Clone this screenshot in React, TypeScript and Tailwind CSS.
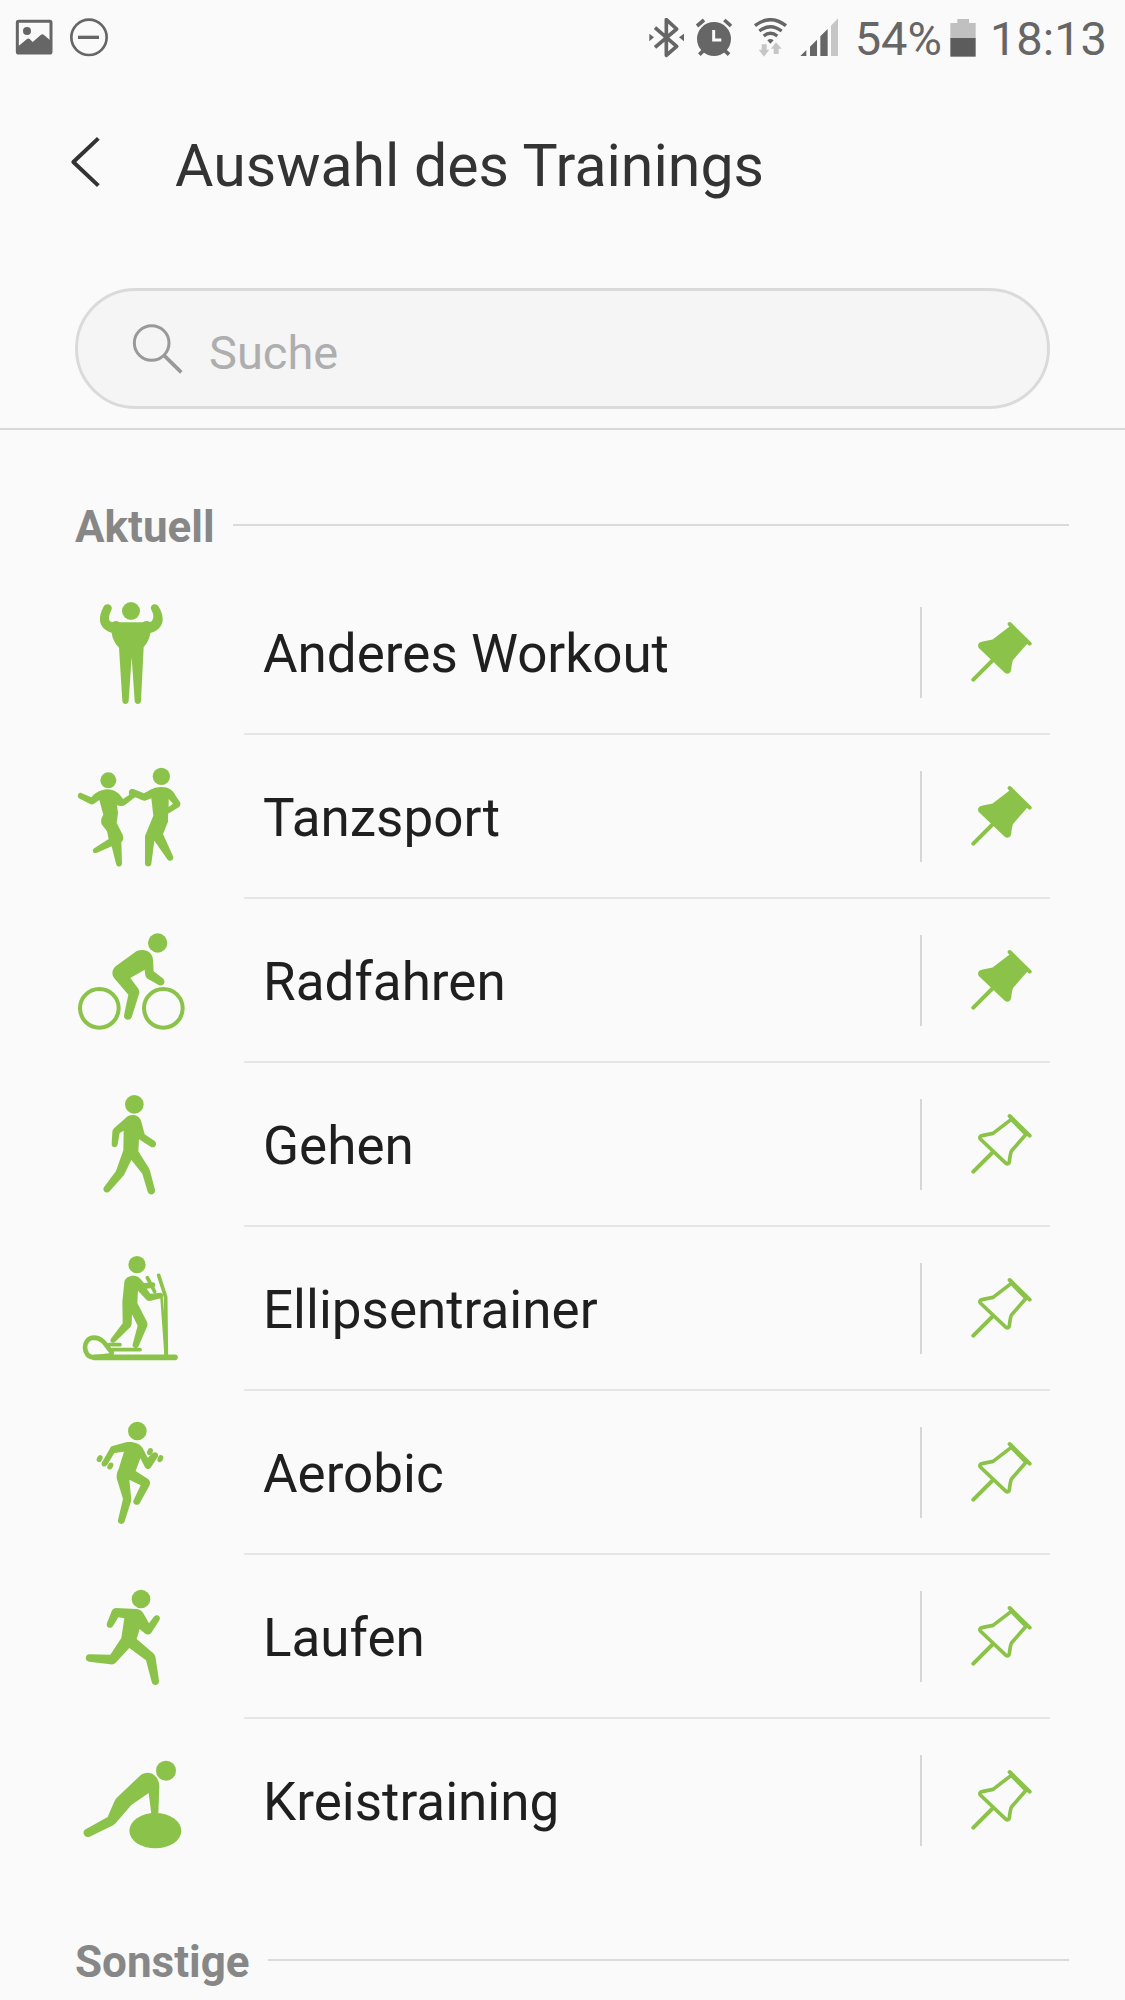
import { useState } from "react";
import type { ReactNode } from "react";

type Workout = {
  name: string;
  pinned: boolean;
  viewBox: string;
  icon: ReactNode;
};

const limb = { fill: "none", stroke: "currentColor", strokeLinecap: "round", strokeLinejoin: "round" } as const;

const recent: Workout[] = [
  {
    name: "Anderes Workout",
    pinned: true,
    viewBox: "36 39 360 360",
    icon: (
      <>
        <circle cx="213" cy="93" r="27" />
        <path d="M143 73C136 73 132 77 130 82C123 95 119 108 120 122C122 140 137 153 155 158C157 176 165 190 177 203L187 362C188 375 205 375 206 362L215 232L224 362C225 375 242 375 243 362L251 201C262 190 269 175 271 159C292 153 305 140 308 122C309 107 304 94 297 82C294 76 290 73 284 73C276 73 271 80 273 87C275 94 281 101 280 110C279 119 276 124 270 126C263 121 255 122 248 127L178 127C172 122 165 121 159 126C151 127 147 122 147 114C147 103 152 97 155 88C157 80 151 73 143 73Z" />
      </>
    ),
  },
  {
    name: "Tanzsport",
    pinned: true,
    viewBox: "36 21 360 360",
    icon: (
      <>
        <circle cx="145" cy="91" r="24" />
        <circle cx="304" cy="79" r="26" />
        <path d="M64 129L94 142C106 128 122 119 142 118C163 118 178 130 189 147L208 134C204 124 209 115 220 117L252 130C270 120 283 111 303 111C326 111 340 121 346 136L360 157C363 163 361 168 356 172L324 191L324 215L309 252L339 319C344 330 329 338 322 328L283 272L274 341C273 352 256 352 255 341L255 258L280 197L274 145L255 152C248 154 240 146 225 142L195 165C188 170 177 168 171 165L174 190L170 219L188 254C192 263 190 271 184 277L186 340C187 352 170 353 168 341L155 289L111 308C99 313 93 298 105 293L146 267L141 244L125 223C121 211 125 203 130 194L118 150L102 161C98 164 93 164 89 161L59 146C49 141 54 125 64 129ZM326 147L326 171L339 161Z" fillRule="evenodd" />
      </>
    ),
  },
  {
    name: "Radfahren",
    pinned: true,
    viewBox: "36 18 360 360",
    icon: (
      <>
        <circle cx="293" cy="84" r="29" />
        <circle cx="118" cy="280" r="58" fill="none" stroke="currentColor" strokeWidth="12" />
        <circle cx="310" cy="280" r="58" fill="none" stroke="currentColor" strokeWidth="12" />
        <path d="M229 109C252 98 279 109 279 136L281 169L308 190C320 200 310 217 296 210L264 192C257 188 255 180 254 164L211 189L235 221C238 226 239 231 237 237L216 304C212 320 191 317 192 301L205 239L164 191C154 179 155 165 167 154Z" />
      </>
    ),
  },
  {
    name: "Gehen",
    pinned: false,
    viewBox: "36 15 360 360",
    icon: (
      <>
        <circle cx="223" cy="73" r="28" />
        <path d="M203 109C220 99 240 107 244 125L254 163L283 182C295 192 284 207 272 200L237 178L235 214L266 263C269 268 270 271 271 276L285 330C287 344 268 349 263 335L247 281L214 240L192 285L149 334C139 344 124 331 133 320L168 273L190 211L191 152L179 159L173 193C171 206 154 204 155 191L157 157C157 151 159 148 163 144Z" />
      </>
    ),
  },
  {
    name: "Ellipsentrainer",
    pinned: false,
    viewBox: "36 12 360 360",
    icon: (
      <>
        <circle cx="231" cy="59" r="26" />
        <path d="M193 111C198 88 233 86 244 105L252 114L280 112C288 114 288 126 280 128L260 131L271 146L302 143C312 145 313 158 303 160L269 168C263 168 260 166 257 162L234 137L232 174L260 229C263 235 263 239 261 245L236 303C231 315 215 308 218 298L233 242L216 208L215 236C214 242 212 245 208 249L165 291C155 298 147 289 154 280L188 235L187 170Z" />
        <path d="M154 331L103 337C66 338 66 278 102 278C135 279 142 312 155 320Z" {...limb} strokeWidth="14" />
        <path d="M148 299L180 299M156 314L240 314" {...limb} strokeWidth="11" />
        <path d="M103 337L345 337" {...limb} strokeWidth="17" />
        <path d="M262 98L284 140M296 91L317 156L319 330" {...limb} strokeWidth="11" />
        <path d="M305 160L317 330" {...limb} strokeWidth="8" />
      </>
    ),
  },
  {
    name: "Aerobic",
    pinned: false,
    viewBox: "36 24 360 360",
    icon: (
      <>
        <circle cx="232" cy="78" r="28" />
        <path d="M155 124L198 112C222 109 240 116 249 131L263 158L277 145C286 136 299 146 293 156L273 187C269 194 259 194 255 187L241 160L227 198L263 221C271 226 272 234 268 242L240 293C233 306 215 297 221 285L242 241L208 224L214 286L194 349C190 362 171 357 174 345L189 282L170 220C169 208 172 198 176 192L192 140L163 144L142 179C134 190 119 182 127 170L149 132C151 128 152 126 155 124Z" />
        <ellipse cx="119" cy="161" rx="8" ry="11" transform="rotate(30 119 161)" />
        <ellipse cx="151" cy="183" rx="8" ry="11" transform="rotate(30 151 183)" />
        <ellipse cx="270" cy="140" rx="8" ry="11" transform="rotate(25 270 140)" />
        <ellipse cx="301" cy="161" rx="8" ry="11" transform="rotate(25 301 161)" />
      </>
    ),
  },
  {
    name: "Laufen",
    pinned: false,
    viewBox: "36 6 360 360",
    icon: (
      <>
        <circle cx="243" cy="72" r="28" />
        <path d="M167 99L230 102C240 103 246 108 250 115L267 145L281 126C290 114 305 124 298 136L275 172C270 180 261 181 254 175L239 162L230 192L280 235C285 240 286 244 287 250L297 317C298 332 279 335 275 320L258 256L208 219L169 261C164 267 160 269 151 268L87 260C73 258 75 237 89 238L151 239L184 189L193 130L175 127L159 153C152 164 136 157 141 144L155 109C157 103 161 100 167 99Z" />
      </>
    ),
  },
  {
    name: "Kreistraining",
    pinned: false,
    viewBox: "36 3 360 360",
    icon: (
      <>
        <circle cx="318" cy="92" r="30" />
        <ellipse cx="286" cy="272" rx="78" ry="53" />
        <path d="M240 107C266 87 296 105 298 137L295 222L274 222L266 159L214 195L168 248C163 253 159 256 153 259L89 290C74 296 63 276 77 268L143 231L162 187C165 179 170 173 176 168Z" />
      </>
    ),
  },
];

function PinIcon({ filled }: { filled: boolean }) {
  return (
    <svg viewBox="210 57 192 192" className="size-16" aria-hidden="true">
      <path
        d="M334 79L378 124L335 173C331 180 330 188 328 206C327 212 323 215 318 211L241 138C238 133 240 129 246 128L279 121Z"
        fill={filled ? "currentColor" : "none"}
        stroke="currentColor"
        strokeWidth="11"
        strokeLinejoin="round"
      />
      <path d="M329 69L389 128M276 180L220 236" {...limb} strokeWidth="12" />
    </svg>
  );
}

function StatusBar() {
  return (
    <div className="flex h-[76px] items-center justify-between pl-[15px] pr-[18px] text-[#666666]">
      <div className="flex items-center gap-4">
        <svg viewBox="45 54 112 120" className="h-10 w-[38px]" aria-hidden="true">
          <rect x="51" y="64" width="101" height="95" rx="4" fill="none" stroke="currentColor" strokeWidth="9" />
          <circle cx="80" cy="93" r="12" fill="currentColor" />
          <path d="M52 140L80 117Q84 114 88 117L97 126L121 105Q126 101 131 105L152 123V160H52Z" fill="currentColor" />
        </svg>
        <svg viewBox="210 54 120 120" className="size-10" aria-hidden="true">
          <circle cx="270" cy="112" r="53" fill="none" stroke="currentColor" strokeWidth="8" />
          <path d="M237 112H300" stroke="currentColor" strokeWidth="10" />
        </svg>
      </div>
      <div className="flex items-center gap-[14px]">
        <svg viewBox="57 54 579 120" className="h-10 w-[193px]" aria-hidden="true">
          <path d="M78 83L143 139L112 166V59L143 87L78 142" fill="none" stroke="currentColor" strokeWidth="11" strokeLinejoin="round" />
          <path d="M61 101L75 112L61 124ZM165 101L150 112L165 124Z" fill="currentColor" />
          <circle cx="255" cy="117" r="51" fill="currentColor" />
          <path d="M204 78L225 60M306 78L286 60M211 164L224 151M300 164L287 151" stroke="currentColor" strokeWidth="11" />
          <path d="M254 90V120H277" fill="none" stroke="#fafafa" strokeWidth="9" />
          <path d="M378 77Q424 41 471 77M391 93Q424 67 458 93M404 108Q424 92 445 108" fill="none" stroke="currentColor" strokeWidth="10" />
          <path d="M415 121Q424 113 434 121L424 131Z" fill="currentColor" />
          <path d="M398 133H413V149H421L405 170L389 149H398ZM434 162H449V146H458L441 127L426 146H434Z" fill="#c6c6c6" />
          <path d="M514 168L532 150V168ZM543 140L564 119V168H543ZM574 109L596 87V168H574Z" fill="currentColor" />
          <path d="M606 77L627 55V168H606Z" fill="#c6c6c6" />
        </svg>
        <div className="flex items-center gap-2">
          <span className="text-[47px] leading-none">54%</span>
          <svg viewBox="963 54 78 120" className="h-10 w-[26px]" aria-hidden="true">
            <path d="M964 69H985V57H1020V69H1040V115H964Z" fill="#c0c0c0" />
            <path d="M964 114H1040V170H964Z" fill="#5c5c5c" />
          </svg>
        </div>
        <span className="text-[47px] leading-none">18:13</span>
      </div>
    </div>
  );
}

function SectionTitle({ children }: { children: ReactNode }) {
  return (
    <div className="flex h-20 items-center gap-[18px] pl-[75px] pr-14">
      <h2 className="pt-1 text-[44px] leading-none font-bold text-[#878787]">{children}</h2>
      <div className="h-[2px] flex-1 bg-[#dadada]" />
    </div>
  );
}

export default function App() {
  const [pins, setPins] = useState(recent.map((workout) => workout.pinned));

  const togglePin = (index: number) => {
    setPins(pins.map((pinned, i) => (i === index ? !pinned : pinned)));
  };

  return (
    <div className="min-h-screen bg-[#fafafa] font-[Roboto,sans-serif]">
      <StatusBar />

      <header className="border-b-2 border-[#d8d8d8] pb-[19px]">
        <div className="flex h-[212px] items-start gap-[72px] pl-[68px] pt-[47px]">
          <button type="button" aria-label="Zurück" className="flex h-20 items-center text-[#333333]">
            <svg viewBox="201 400 105 180" className="h-[60px] w-[35px]" aria-hidden="true">
              <path d="M292 416L217 487L292 558" fill="none" stroke="currentColor" strokeWidth="12" strokeLinejoin="round" />
            </svg>
          </button>
          <h1 className="text-[59px] leading-[86px] text-[#333333]">Auswahl des Trainings</h1>
        </div>
        <label className="mx-[75px] flex h-[121px] items-center gap-[25px] rounded-full border-3 border-[#dadada] bg-[#f5f5f5] pl-[54px] pr-12">
          <svg viewBox="216 157 156 156" className="size-[52px] text-[#999999]" aria-hidden="true">
            <circle cx="275" cy="217" r="52" fill="none" stroke="currentColor" strokeWidth="9" />
            <path d="M312 254L364 305" stroke="currentColor" strokeWidth="11" />
          </svg>
          <input
            type="text"
            aria-label="Suche"
            placeholder="Suche"
            className="min-w-0 flex-1 bg-transparent pt-2 text-[47px] leading-none text-[#333333] outline-none placeholder:text-[#aeaeae]"
          />
        </label>
      </header>

      <main className="flex flex-col gap-[37px] pt-[55px]">
        <section className="flex flex-col gap-[6px]">
          <SectionTitle>Aktuell</SectionTitle>
          <ul className="pl-18 pr-[75px]">
            {recent.map((workout, index) => (
              <li key={workout.name} className="group flex h-41 items-center gap-13">
                <svg viewBox={workout.viewBox} fill="currentColor" className="size-30 shrink-0 text-[#8bc34a]" aria-hidden="true">
                  {workout.icon}
                </svg>
                <div className="flex h-full flex-1 items-center justify-between border-b-2 border-[#e6e6e6] pl-[19px] group-last:border-transparent">
                  <span className="pt-1 text-[53px] leading-none text-[#1f1f1f]">{workout.name}</span>
                  <button
                    type="button"
                    aria-label={`${workout.name} anheften`}
                    aria-pressed={pins[index]}
                    onClick={() => togglePin(index)}
                    className="flex h-[91px] items-center border-l-2 border-[#d6d6d6] pl-12 pr-4 text-[#8bc34a]"
                  >
                    <PinIcon filled={pins[index]} />
                  </button>
                </div>
              </li>
            ))}
          </ul>
        </section>
        <section>
          <SectionTitle>Sonstige</SectionTitle>
        </section>
      </main>
    </div>
  );
}
